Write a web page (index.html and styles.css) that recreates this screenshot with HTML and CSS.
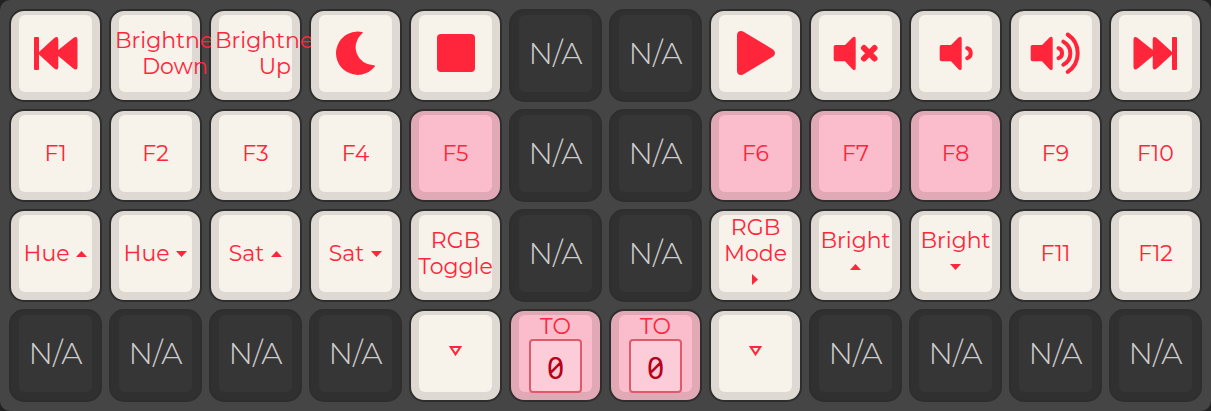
FILE: index.html
```html
<!DOCTYPE html>
<html lang="en">
<head>
<meta charset="utf-8">
<title>Keyboard layer</title>
<link rel="stylesheet" href="styles.css">
</head>
<body>
<main class="board">
  <button class="key" aria-label="Previous track"><span class="face"><svg class="icon" viewBox="0 0 51 51"><path d="M4 10q0-1 1-1h3q1 0 1 1v14L24 10.200Q28.300 7 28.300 12V22L43 10.200Q47.500 7 47.500 12V38.500Q47.500 43.500 43 40.300L28.300 28V38.500Q28.300 43.500 24 40.300L9 26.500V41q0 1-1 1H5q-1 0-1-1z"/></svg></span></button>
  <button class="key"><span class="face"><span class="spill"><span class="label">Brightness<br>Down</span></span></span></button>
  <button class="key"><span class="face"><span class="spill"><span class="label">Brightness<br>Up</span></span></span></button>
  <button class="key" aria-label="Sleep"><span class="face"><svg class="icon" viewBox="0 0 51 51"><path d="M32 3.900A21.700 21.700 0 1 0 44.800 38.600Q45.400 37 43.500 37.300A18 18 0 0 1 31.500 6Q34 4.200 32 3.900z"/></svg></span></button>
  <button class="key" aria-label="Stop"><span class="face"><svg class="icon" viewBox="0 0 51 51"><rect x="7" y="6" width="38" height="38" rx="4"/></svg></span></button>
  <button class="key na"><span class="face">N/A</span></button>
  <button class="key na"><span class="face">N/A</span></button>
  <button class="key" aria-label="Play"><span class="face"><svg class="icon" viewBox="0 0 51 51"><path d="M7 7.500Q7 3 11 3Q12.500 3 14 4L43 21.500Q45 23 45 25T43 28.500L14 46Q12.500 47 11 47Q7 47 7 42.500z"/></svg></span></button>
  <button class="key" aria-label="Mute"><span class="face"><svg class="icon" viewBox="0 0 51 51"><path d="M5.500 17H15L22.500 9.500Q25.700 7.200 25.700 11V40Q25.700 43.500 22.500 41.200L15 33.300H5.500Q3.700 33.300 3.700 31.500V18.800Q3.700 17 5.500 17z"/><path class="line cross" d="M34 20L44.500 30.500M44.500 20L34 30.500"/></svg></span></button>
  <button class="key" aria-label="Volume down"><span class="face"><svg class="icon" viewBox="0 0 51 51"><path transform="translate(6 0)" d="M5.500 17H15L22.500 9.500Q25.700 7.200 25.700 11V40Q25.700 43.500 22.500 41.200L15 33.300H5.500Q3.700 33.300 3.700 31.500V18.800Q3.700 17 5.500 17z"/><path class="line" d="M37.200 20.200A5.300 5.300 0 0 1 37.200 30.200"/></svg></span></button>
  <button class="key" aria-label="Volume up"><span class="face"><svg class="icon" viewBox="0 0 51 51"><path transform="translate(-3 0)" d="M5.500 17H15L22.500 9.500Q25.700 7.200 25.700 11V40Q25.700 43.500 22.500 41.200L15 33.300H5.500Q3.700 33.300 3.700 31.500V18.800Q3.700 17 5.500 17z"/><path class="line" d="M28.500 20.200A5.300 5.300 0 0 1 28.500 30.200M33.300 13.700A12.900 12.900 0 0 1 33.300 36.700M37.700 6.500A22.400 22.400 0 0 1 37.700 43.800"/></svg></span></button>
  <button class="key" aria-label="Next track"><span class="face"><svg class="icon" viewBox="0 0 51 51"><path transform="matrix(-1 0 0 1 51 0)" d="M4 10q0-1 1-1h3q1 0 1 1v14L24 10.200Q28.300 7 28.300 12V22L43 10.200Q47.500 7 47.500 12V38.500Q47.500 43.500 43 40.300L28.300 28V38.500Q28.300 43.500 24 40.300L9 26.500V41q0 1-1 1H5q-1 0-1-1z"/></svg></span></button>

  <button class="key"><span class="face">F1</span></button>
  <button class="key"><span class="face">F2</span></button>
  <button class="key"><span class="face">F3</span></button>
  <button class="key"><span class="face">F4</span></button>
  <button class="key pink"><span class="face">F5</span></button>
  <button class="key na"><span class="face">N/A</span></button>
  <button class="key na"><span class="face">N/A</span></button>
  <button class="key pink"><span class="face">F6</span></button>
  <button class="key pink"><span class="face">F7</span></button>
  <button class="key pink"><span class="face">F8</span></button>
  <button class="key"><span class="face">F9</span></button>
  <button class="key"><span class="face">F10</span></button>

  <button class="key"><span class="face"><span class="label pair">Hue <svg class="arrow" viewBox="0 0 11 6"><path d="M0 6L5.500 0L11 6z"/></svg></span></span></button>
  <button class="key"><span class="face"><span class="label pair">Hue <svg class="arrow" viewBox="0 0 11 6"><path d="M0 0L5.500 6L11 0z"/></svg></span></span></button>
  <button class="key"><span class="face"><span class="label pair">Sat <svg class="arrow" viewBox="0 0 11 6"><path d="M0 6L5.500 0L11 6z"/></svg></span></span></button>
  <button class="key"><span class="face"><span class="label pair">Sat <svg class="arrow" viewBox="0 0 11 6"><path d="M0 0L5.500 6L11 0z"/></svg></span></span></button>
  <button class="key"><span class="face"><span class="label">RGB<br>Toggle</span></span></button>
  <button class="key na"><span class="face">N/A</span></button>
  <button class="key na"><span class="face">N/A</span></button>
  <button class="key"><span class="face"><span class="label">RGB<br>Mode<span class="arrow-row"><svg class="arrow side" viewBox="0 0 6 11"><path d="M0 0L6 5.500L0 11z"/></svg></span></span></span></button>
  <button class="key"><span class="face"><span class="label">Bright<span class="arrow-row"><svg class="arrow" viewBox="0 0 11 6"><path d="M0 6L5.500 0L11 6z"/></svg></span></span></span></button>
  <button class="key"><span class="face"><span class="label">Bright<span class="arrow-row"><svg class="arrow" viewBox="0 0 11 6"><path d="M0 0L5.500 6L11 0z"/></svg></span></span></span></button>
  <button class="key"><span class="face">F11</span></button>
  <button class="key"><span class="face">F12</span></button>

  <button class="key na"><span class="face">N/A</span></button>
  <button class="key na"><span class="face">N/A</span></button>
  <button class="key na"><span class="face">N/A</span></button>
  <button class="key na"><span class="face">N/A</span></button>
  <button class="key" aria-label="Transparent"><span class="face"><svg class="through" viewBox="0 0 13 10"><path d="M1.700 1H11.300L6.500 8.300z"/></svg></span></button>
  <button class="key pink"><span class="face layer"><span>TO</span><span class="slot">0</span></span></button>
  <button class="key pink"><span class="face layer"><span>TO</span><span class="slot">0</span></span></button>
  <button class="key" aria-label="Transparent"><span class="face"><svg class="through" viewBox="0 0 13 10"><path d="M1.700 1H11.300L6.500 8.300z"/></svg></span></button>
  <button class="key na"><span class="face">N/A</span></button>
  <button class="key na"><span class="face">N/A</span></button>
  <button class="key na"><span class="face">N/A</span></button>
  <button class="key na"><span class="face">N/A</span></button>
</main>
</body>
</html>
```
FILE: styles.css
```css
* {
  box-sizing: border-box;
}

body {
  margin: 0;
  background: #222;
}

.board {
  display: grid;
  grid-template-columns: repeat(12, minmax(0, 1fr));
  gap: 7px;
  padding: 9px;
  border-radius: 10px;
  background: #454545;
}

.key {
  display: flex;
  aspect-ratio: 1;
  min-width: 0;
  padding: 4px 8px 8px;
  border: 2px solid #2e2e2e;
  border-radius: 15px;
  background: #dedad3;
  color: #ff253a;
  font: 400 22px/26px Montserrat, Inter, sans-serif;
  cursor: pointer;
}

.face {
  position: relative;
  display: flex;
  flex: 1;
  align-items: center;
  justify-content: center;
  min-width: 0;
  border-radius: 6px;
  background: #f7f2ea;
  white-space: nowrap;
}

.pink {
  background: #e1a9b6;
}

.pink .face {
  background: #fbbccb;
}

.na {
  background: #303030;
  color: #ccc;
  font-size: 30px;
  font-weight: 300;
}

.na .face {
  background: #363636;
}

.label {
  text-align: center;
}

.pair {
  display: flex;
  align-items: center;
  gap: 7px;
}

/* Long labels run past the cap and are cut at the next key. */
.spill {
  position: absolute;
  z-index: 1;
  inset: 0 -19px 0 -4px;
  display: flex;
  align-items: center;
  overflow: hidden;
}

.icon {
  width: 51px;
  height: 51px;
  fill: currentColor;
}

.line {
  fill: none;
  stroke: currentColor;
  stroke-width: 4;
  stroke-linecap: round;
}

.cross {
  stroke-width: 6;
}

.arrow {
  width: 11px;
  height: 6px;
  fill: currentColor;
}

.side {
  width: 6px;
  height: 11px;
}

.arrow-row {
  display: flex;
  align-items: center;
  justify-content: center;
  height: 26px;
}

.through {
  width: 13px;
  height: 10px;
  margin-bottom: 6px;
  fill: none;
  stroke: currentColor;
  stroke-width: 2;
}

.layer {
  flex-direction: column;
  justify-content: flex-start;
  line-height: 24px;
}

.slot {
  width: 53px;
  height: 54px;
  flex: none;
  border: 2px solid #de5b6b;
  border-radius: 4px;
  background: #fccdd8;
  color: #b80018;
  font: 400 30px/54px "Noto Sans", sans-serif;
  font-feature-settings: "zero";
}
```
